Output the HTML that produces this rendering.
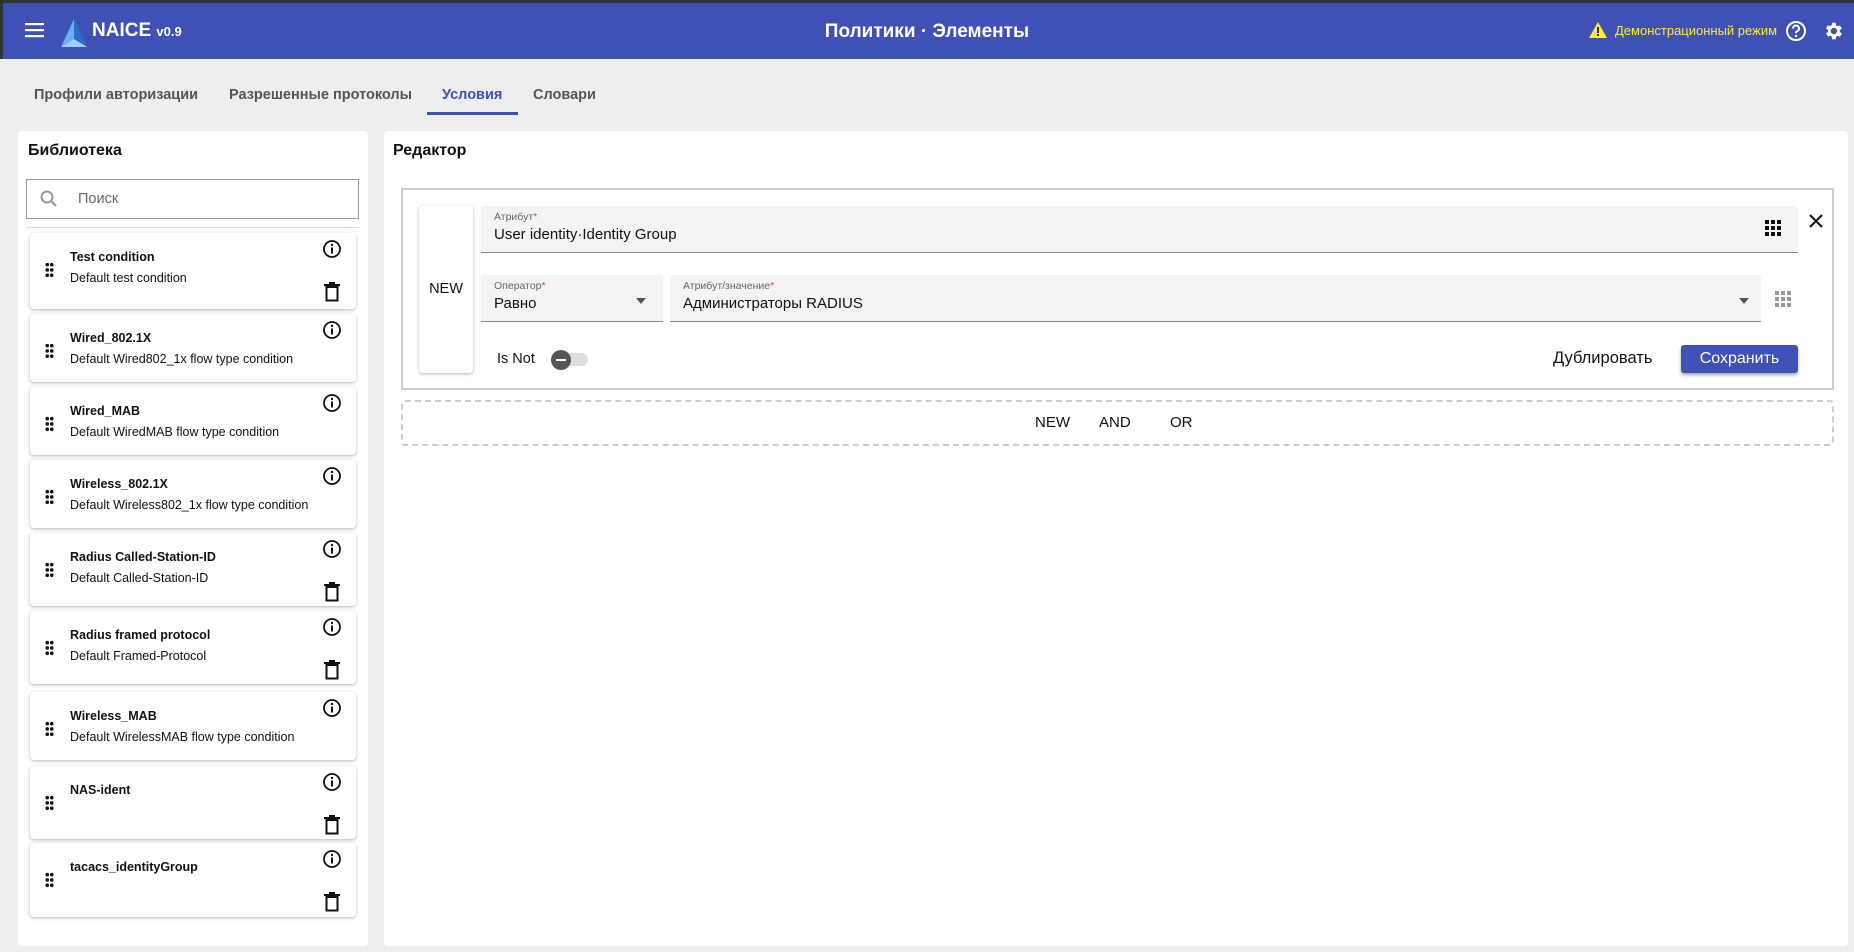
<!DOCTYPE html>
<html><head><meta charset="utf-8"><style>
*{box-sizing:border-box;margin:0;padding:0}
body{width:1854px;height:952px;background:#eeeeee;font-family:"Liberation Sans","Noto Sans CJK SC",sans-serif;position:relative;overflow:hidden;color:#111}
.a{position:absolute}
.hdr{left:0;top:0;width:1854px;height:59px;background:#3f51b5;border-top:3px solid #333;border-left:3px solid #333}
.tab{top:87px;font-size:14.5px;font-weight:bold;color:#555}
.panel{background:#fff;border-radius:4px}
.card{position:absolute;left:30px;width:326px;background:#fff;border-radius:4px;box-shadow:0 1px 3px rgba(0,0,0,.3)}
.card .t{position:absolute;left:40px;top:17px;font-size:12.5px;font-weight:bold}
.card .d{position:absolute;left:40px;top:38px;font-size:12.5px}
.dots{position:absolute;left:15px;top:29px;width:9px;height:16px;background:radial-gradient(circle,#111 1.7px,transparent 2px) 0 0/4.5px 5.3px}
.info{position:absolute;left:292px;top:6px}
.trash{position:absolute;left:294px;top:49px}
.fld{background:#f4f4f4;border-bottom:1.5px solid #888;border-radius:3px 3px 0 0}
.lbl{position:absolute;left:13px;top:5px;font-size:10.5px;color:#666}
.lbl i{color:#e53935;font-style:normal}
.val{position:absolute;left:13px;top:20px;font-size:15px}
</style></head><body>
<div class="a hdr"></div>
<svg class="a" style="left:25px;top:22px" width="20" height="16" viewBox="0 0 20 16"><rect y="1" width="19" height="2.2" fill="#fff"/><rect y="7" width="19" height="2.2" fill="#fff"/><rect y="13" width="19" height="2.2" fill="#fff"/></svg>
<svg class="a" style="left:60px;top:17px" width="28" height="32" viewBox="0 0 28 32"><polygon points="14,2 1,30 14,22" fill="#6ab0f0"/><polygon points="14,2 27,30 14,22" fill="#2a6fc9"/><polygon points="1,30 27,30 14,22" fill="#9fd0ff"/></svg>
<div class="a" style="left:92px;top:20px;color:#fff;font-size:19px;font-weight:bold">NAICE <span style="font-size:13px">v0.9</span></div>
<div class="a" style="left:0;width:1854px;top:21px;text-align:center;color:#fff;font-size:19px;font-weight:bold">Политики · Элементы</div>
<svg class="a" style="left:1589px;top:22px" width="18" height="16" viewBox="0 0 18 16"><polygon points="9,0 18,16 0,16" fill="#ffeb3b"/><rect x="8" y="5" width="2" height="6" fill="#333"/><rect x="8" y="12" width="2" height="2" fill="#333"/></svg>
<div class="a" style="left:1615px;top:23px;color:#ffeb3b;font-size:13px">Демонстрационный режим</div>
<svg class="a" style="left:1785px;top:20px" width="22" height="22" viewBox="0 0 22 22"><circle cx="11" cy="11" r="9" fill="none" stroke="#fff" stroke-width="2"/><path d="M8 8.5a3 3 0 1 1 4 2.8c-.8.4-1 1-1 2" fill="none" stroke="#fff" stroke-width="2"/><circle cx="11" cy="16" r="1.2" fill="#fff"/></svg>
<svg class="a" style="left:1822px;top:20px" width="22" height="22" viewBox="0 0 24 24"><path fill="#fff" d="M19.4 13a7.5 7.5 0 0 0 0-2l2.1-1.6-2-3.5-2.5 1a7 7 0 0 0-1.7-1L15 3h-4l-.4 2.7a7 7 0 0 0-1.7 1l-2.5-1-2 3.5L6.6 11a7.5 7.5 0 0 0 0 2l-2.1 1.6 2 3.5 2.5-1a7 7 0 0 0 1.7 1L11 21h4l.4-2.7a7 7 0 0 0 1.7-1l2.5 1 2-3.5zM13 15.5A3.5 3.5 0 1 1 13 8.5a3.5 3.5 0 0 1 0 7z"/></svg>

<div class="a tab" style="left:34px">Профили авторизации</div>
<div class="a tab" style="left:229px">Разрешенные протоколы</div>
<div class="a tab" style="left:442px;color:#3f51b5">Условия</div>
<div class="a tab" style="left:533px">Словари</div>
<div class="a" style="left:427px;top:112px;width:91px;height:3px;background:#3f51b5"></div>

<div class="a panel" style="left:18px;top:131px;width:350px;height:815px"></div>
<div class="a" style="left:28px;top:142px;font-size:16px;font-weight:bold">Библиотека</div>
<div class="a" style="left:26px;top:179px;width:333px;height:40px;border:1px solid #999;background:#fff"></div>
<svg class="a" style="left:39px;top:189px" width="20" height="20" viewBox="0 0 20 20"><circle cx="8" cy="8" r="5.5" fill="none" stroke="#999" stroke-width="2"/><path d="M12 12l5 5" stroke="#999" stroke-width="2.2"/></svg>
<div class="a" style="left:78px;top:191px;font-size:14.5px;color:#666">Поиск</div>
<div class="a" style="left:26px;top:227px;width:333px;height:1px;background:#ddd"></div>

<div class="card" style="top:233px;height:76px"><div class="dots"></div><div class="t">Test condition</div><div class="d">Default test condition</div>
<svg class="info" width="20" height="20" viewBox="0 0 20 20"><circle cx="10" cy="10" r="8" fill="none" stroke="#111" stroke-width="1.8"/><rect x="9" y="8.5" width="2" height="6" fill="#111"/><circle cx="10" cy="6" r="1.2" fill="#111"/></svg>
<svg class="trash" width="16" height="20" viewBox="0 0 16 20"><rect x="0" y="2" width="16" height="2" fill="#111"/><rect x="5" y="0" width="6" height="2" fill="#111"/><path d="M2.5 5h11v13.5h-11z" fill="none" stroke="#111" stroke-width="2"/></svg></div>

<div class="card" style="top:314px;height:68px"><div class="dots"></div><div class="t">Wired_802.1X</div><div class="d">Default Wired802_1x flow type condition</div>
<svg class="info" width="20" height="20" viewBox="0 0 20 20"><circle cx="10" cy="10" r="8" fill="none" stroke="#111" stroke-width="1.8"/><rect x="9" y="8.5" width="2" height="6" fill="#111"/><circle cx="10" cy="6" r="1.2" fill="#111"/></svg></div>

<div class="card" style="top:387px;height:68px"><div class="dots"></div><div class="t">Wired_MAB</div><div class="d">Default WiredMAB flow type condition</div>
<svg class="info" width="20" height="20" viewBox="0 0 20 20"><circle cx="10" cy="10" r="8" fill="none" stroke="#111" stroke-width="1.8"/><rect x="9" y="8.5" width="2" height="6" fill="#111"/><circle cx="10" cy="6" r="1.2" fill="#111"/></svg></div>

<div class="card" style="top:460px;height:68px"><div class="dots"></div><div class="t">Wireless_802.1X</div><div class="d">Default Wireless802_1x flow type condition</div>
<svg class="info" width="20" height="20" viewBox="0 0 20 20"><circle cx="10" cy="10" r="8" fill="none" stroke="#111" stroke-width="1.8"/><rect x="9" y="8.5" width="2" height="6" fill="#111"/><circle cx="10" cy="6" r="1.2" fill="#111"/></svg></div>

<div class="card" style="top:533px;height:73px"><div class="dots"></div><div class="t">Radius Called-Station-ID</div><div class="d">Default Called-Station-ID</div>
<svg class="info" width="20" height="20" viewBox="0 0 20 20"><circle cx="10" cy="10" r="8" fill="none" stroke="#111" stroke-width="1.8"/><rect x="9" y="8.5" width="2" height="6" fill="#111"/><circle cx="10" cy="6" r="1.2" fill="#111"/></svg>
<svg class="trash" width="16" height="20" viewBox="0 0 16 20"><rect x="0" y="2" width="16" height="2" fill="#111"/><rect x="5" y="0" width="6" height="2" fill="#111"/><path d="M2.5 5h11v13.5h-11z" fill="none" stroke="#111" stroke-width="2"/></svg></div>

<div class="card" style="top:611px;height:73px"><div class="dots"></div><div class="t">Radius framed protocol</div><div class="d">Default Framed-Protocol</div>
<svg class="info" width="20" height="20" viewBox="0 0 20 20"><circle cx="10" cy="10" r="8" fill="none" stroke="#111" stroke-width="1.8"/><rect x="9" y="8.5" width="2" height="6" fill="#111"/><circle cx="10" cy="6" r="1.2" fill="#111"/></svg>
<svg class="trash" width="16" height="20" viewBox="0 0 16 20"><rect x="0" y="2" width="16" height="2" fill="#111"/><rect x="5" y="0" width="6" height="2" fill="#111"/><path d="M2.5 5h11v13.5h-11z" fill="none" stroke="#111" stroke-width="2"/></svg></div>

<div class="card" style="top:692px;height:68px"><div class="dots"></div><div class="t">Wireless_MAB</div><div class="d">Default WirelessMAB flow type condition</div>
<svg class="info" width="20" height="20" viewBox="0 0 20 20"><circle cx="10" cy="10" r="8" fill="none" stroke="#111" stroke-width="1.8"/><rect x="9" y="8.5" width="2" height="6" fill="#111"/><circle cx="10" cy="6" r="1.2" fill="#111"/></svg></div>

<div class="card" style="top:766px;height:73px"><div class="dots"></div><div class="t">NAS-ident</div>
<svg class="info" width="20" height="20" viewBox="0 0 20 20"><circle cx="10" cy="10" r="8" fill="none" stroke="#111" stroke-width="1.8"/><rect x="9" y="8.5" width="2" height="6" fill="#111"/><circle cx="10" cy="6" r="1.2" fill="#111"/></svg>
<svg class="trash" width="16" height="20" viewBox="0 0 16 20"><rect x="0" y="2" width="16" height="2" fill="#111"/><rect x="5" y="0" width="6" height="2" fill="#111"/><path d="M2.5 5h11v13.5h-11z" fill="none" stroke="#111" stroke-width="2"/></svg></div>

<div class="card" style="top:843px;height:74px"><div class="dots"></div><div class="t">tacacs_identityGroup</div>
<svg class="info" width="20" height="20" viewBox="0 0 20 20"><circle cx="10" cy="10" r="8" fill="none" stroke="#111" stroke-width="1.8"/><rect x="9" y="8.5" width="2" height="6" fill="#111"/><circle cx="10" cy="6" r="1.2" fill="#111"/></svg>
<svg class="trash" width="16" height="20" viewBox="0 0 16 20"><rect x="0" y="2" width="16" height="2" fill="#111"/><rect x="5" y="0" width="6" height="2" fill="#111"/><path d="M2.5 5h11v13.5h-11z" fill="none" stroke="#111" stroke-width="2"/></svg></div>

<div class="a panel" style="left:384px;top:131px;width:1464px;height:815px"></div>
<div class="a" style="left:393px;top:142px;font-size:16px;font-weight:bold">Редактор</div>
<div class="a" style="left:401px;top:188px;width:1433px;height:202px;border:2px solid #ccc"></div>
<div class="a" style="left:419px;top:206px;width:54px;height:167px;background:#fff;border-radius:4px;box-shadow:0 1px 3px rgba(0,0,0,.3)"></div>
<div class="a" style="left:419px;width:54px;top:281px;text-align:center;font-size:14.5px">NEW</div>
<div class="a fld" style="left:481px;top:206px;width:1317px;height:47px"><div class="lbl">Атрибут<i>*</i></div><div class="val">User identity·Identity Group</div>
<svg class="a" style="left:1284px;top:14px" width="16" height="16" viewBox="0 0 16 16" fill="#111"><rect x="0" y="0" width="4" height="4"/><rect x="6" y="0" width="4" height="4"/><rect x="12" y="0" width="4" height="4"/><rect x="0" y="6" width="4" height="4"/><rect x="6" y="6" width="4" height="4"/><rect x="12" y="6" width="4" height="4"/><rect x="0" y="12" width="4" height="4"/><rect x="6" y="12" width="4" height="4"/><rect x="12" y="12" width="4" height="4"/></svg></div>
<svg class="a" style="left:1808px;top:213px" width="16" height="16" viewBox="0 0 16 16"><path d="M2 2l12 12M14 2L2 14" stroke="#111" stroke-width="2"/></svg>
<div class="a fld" style="left:481px;top:275px;width:182px;height:47px"><div class="lbl">Оператор<i>*</i></div><div class="val">Равно</div>
<svg class="a" style="left:155px;top:23px" width="10" height="6"><polygon points="0,0 10,0 5,6" fill="#555"/></svg></div>
<div class="a fld" style="left:670px;top:275px;width:1091px;height:47px"><div class="lbl">Атрибут/значение<i>*</i></div><div class="val">Администраторы RADIUS</div>
<svg class="a" style="left:1069px;top:23px" width="10" height="6"><polygon points="0,0 10,0 5,6" fill="#555"/></svg></div>
<svg class="a" style="left:1775px;top:291px" width="16" height="16" viewBox="0 0 16 16" fill="#999"><rect x="0" y="0" width="4" height="4"/><rect x="6" y="0" width="4" height="4"/><rect x="12" y="0" width="4" height="4"/><rect x="0" y="6" width="4" height="4"/><rect x="6" y="6" width="4" height="4"/><rect x="12" y="6" width="4" height="4"/><rect x="0" y="12" width="4" height="4"/><rect x="6" y="12" width="4" height="4"/><rect x="12" y="12" width="4" height="4"/></svg>
<div class="a" style="left:497px;top:351px;font-size:14.5px">Is Not</div>
<div class="a" style="left:556px;top:353px;width:32px;height:13px;border-radius:7px;background:#ddd"></div>
<div class="a" style="left:551px;top:350px;width:20px;height:20px;border-radius:10px;background:#555"><div style="margin:9px 5px 0;height:2px;background:#fff"></div></div>
<div class="a" style="left:1553px;top:349px;font-size:16.5px">Дублировать</div>
<div class="a" style="left:1681px;top:345px;width:117px;height:28px;background:#3f51b5;border-radius:3px;color:#fff;font-size:16px;text-align:center;line-height:28px;box-shadow:0 2px 3px rgba(0,0,0,.35)">Сохранить</div>
<div class="a" style="left:401px;top:400px;width:1433px;height:46px;border:2px dashed #ccc;border-radius:4px"></div>
<div class="a" style="left:1035px;top:414px;font-size:15px">NEW</div>
<div class="a" style="left:1099px;top:414px;font-size:15px">AND</div>
<div class="a" style="left:1170px;top:414px;font-size:15px">OR</div>
</body></html>
